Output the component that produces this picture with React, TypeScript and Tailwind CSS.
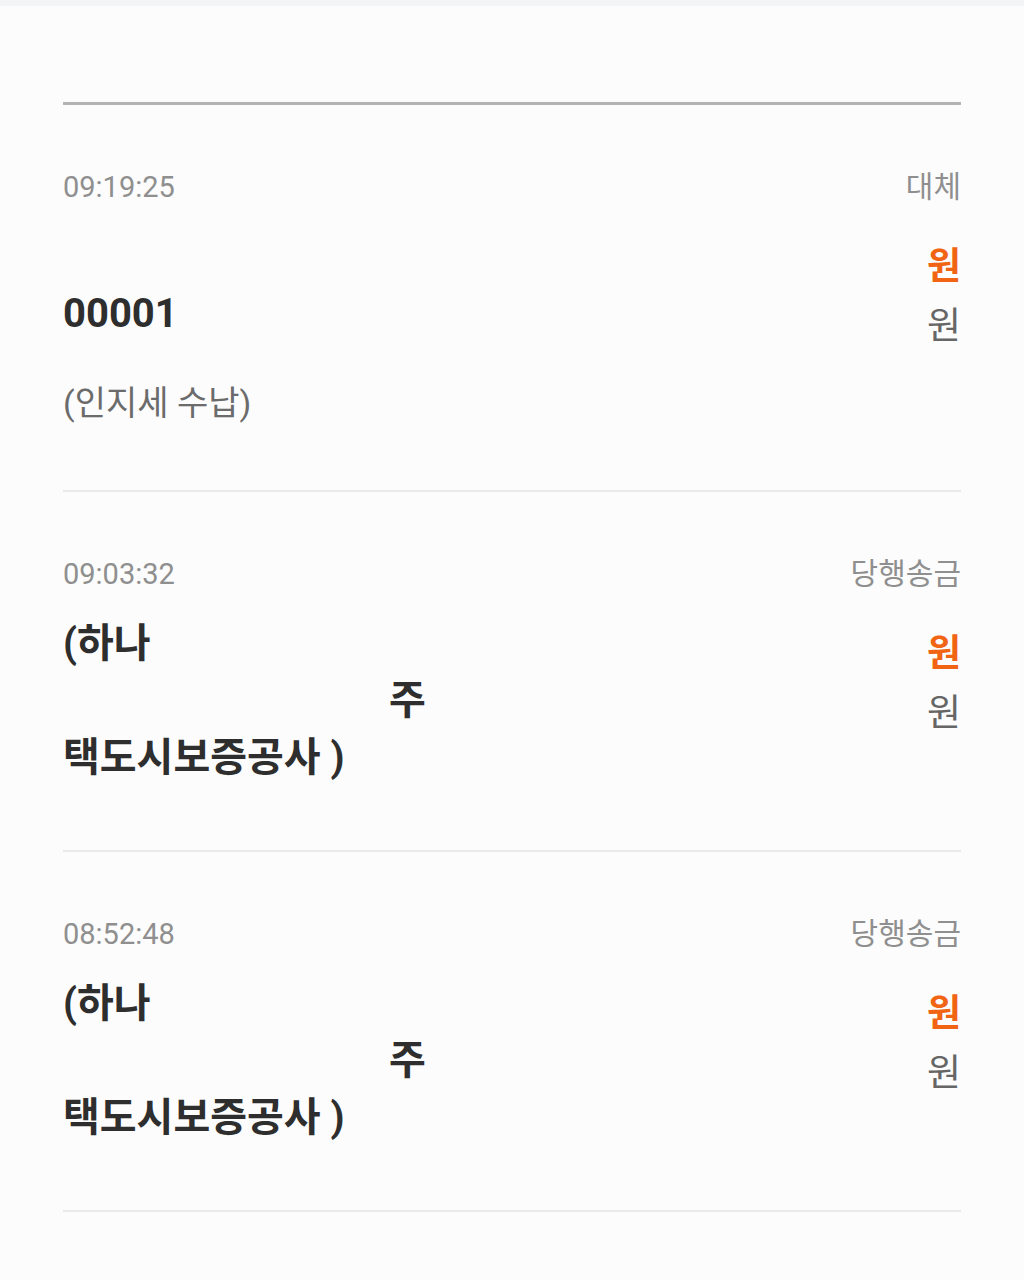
import React from "react";

type Item = {
  time: string;
  kind: string;
  lines: { text: string; indent?: boolean }[];
  memo?: string;
};

const items: Item[] = [
  {
    time: "09:19:25",
    kind: "대체",
    lines: [{ text: "" }, { text: "00001" }],
    memo: "(인지세 수납)",
  },
  {
    time: "09:03:32",
    kind: "당행송금",
    lines: [{ text: "(하나" }, { text: "주", indent: true }, { text: "택도시보증공사 )" }],
  },
  {
    time: "08:52:48",
    kind: "당행송금",
    lines: [{ text: "(하나" }, { text: "주", indent: true }, { text: "택도시보증공사 )" }],
  },
];

function Row({ item }: { item: Item }) {
  return (
    <div className="border-b-2 border-[#e8e9ea]">
      <div className="flex items-center justify-between pt-[62px] h-[102px]">
        <span className="text-[29px] leading-[40px] text-[#8f8f8f]">{item.time}</span>
        <span className="text-[30px] leading-[40px] text-[#8f8f8f]">{item.kind}</span>
      </div>
      <div className="flex justify-between pt-[21px]">
        <div className="flex flex-col">
          {item.lines.map((l, i) => (
            <div
              key={i}
              className={
                "h-[57px] leading-[57px] text-[40px] font-bold text-[#2e2e2e] " +
                (l.indent ? "pl-[326px]" : "")
              }
            >
              {l.text}
            </div>
          ))}
          {item.memo && (
            <div className="mt-[33px] text-[34px] leading-[57px] text-[#6b6b6b]">{item.memo}</div>
          )}
        </div>
        <div className="flex flex-col items-end pt-[9px]">
          <span className="h-[60px] leading-[60px] text-[37px] font-bold text-[#f06414]">원</span>
          <span className="h-[60px] leading-[60px] text-[37px] text-[#666]">원</span>
        </div>
      </div>
      <div className={item.memo ? "h-[58px]" : "h-[64px]"} />
    </div>
  );
}

export default function App() {
  return (
    <div
      className="min-h-[1280px] bg-[#fcfcfc]"
      style={{ fontFamily: 'Roboto, "Noto Sans CJK KR", sans-serif' }}
    >
      <div className="h-[6px] bg-[#f3f4f5]" />
      <div className="px-[63px] pb-[60px]">
        <div className="h-[99px] border-b-[3px] border-[#b3b3b3]" />
        {items.map((it, i) => (
          <Row key={i} item={it} />
        ))}
      </div>
    </div>
  );
}
